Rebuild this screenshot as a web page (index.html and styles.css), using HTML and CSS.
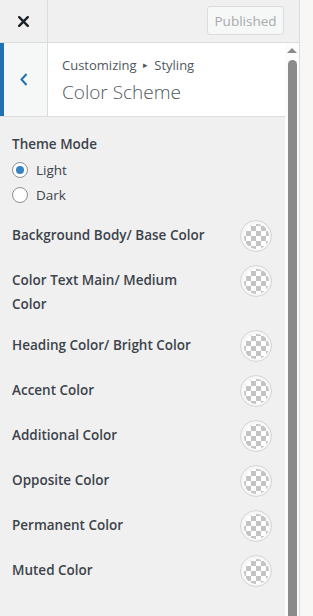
FILE: index.html
```html
<!DOCTYPE html>
<html lang="en">
<head>
    <meta charset="UTF-8">
    <meta name="viewport" content="width=device-width, initial-scale=1.0">
    <title>Customizer - Color Scheme</title>
    <link rel="stylesheet" href="styles.css">
</head>
<body>
    <div class="sidebar">
        <div class="topbar">
            <button class="close-btn" aria-label="Close">
                <svg width="11" height="11" viewBox="0 0 11 11"><path d="M1.2 1.2 L9.8 9.8 M9.8 1.2 L1.2 9.8" stroke="#1d2327" stroke-width="2.4" stroke-linecap="round"/></svg>
            </button>
            <div class="actions">
                <button class="publish-btn" disabled>Published</button>
            </div>
        </div>

        <div class="scroll">
            <div class="panel">
                <div class="section-head">
                    <button class="back-btn" aria-label="Back">
                        <svg width="8" height="13" viewBox="0 0 8 13"><path d="M6.5 1 L1.5 6.5 L6.5 12" fill="none" stroke="#2271b1" stroke-width="2"/></svg>
                    </button>
                    <div class="section-title">
                        <div class="crumb">Customizing <span class="sep">&#9656;</span> Styling</div>
                        <h3>Color Scheme</h3>
                    </div>
                </div>

                <div class="section-body">
                    <div class="control-title">Theme Mode</div>
                    <label class="radio-row"><span class="radio checked"></span>Light</label>
                    <label class="radio-row"><span class="radio"></span>Dark</label>

                    <div class="colors">
                        <div class="color-row"><span class="color-label">Background Body/ Base Color</span><span class="swatch"></span></div>
                        <div class="color-row"><span class="color-label">Color Text Main/ Medium Color</span><span class="swatch"></span></div>
                        <div class="color-row"><span class="color-label">Heading Color/ Bright Color</span><span class="swatch"></span></div>
                        <div class="color-row"><span class="color-label">Accent Color</span><span class="swatch"></span></div>
                        <div class="color-row"><span class="color-label">Additional Color</span><span class="swatch"></span></div>
                        <div class="color-row"><span class="color-label">Opposite Color</span><span class="swatch"></span></div>
                        <div class="color-row"><span class="color-label">Permanent Color</span><span class="swatch"></span></div>
                        <div class="color-row"><span class="color-label">Muted Color</span><span class="swatch"></span></div>
                    </div>
                </div>
            </div>
            <div class="scrollbar">
                <span class="arrow"></span>
                <span class="thumb"></span>
            </div>
        </div>
    </div>
    <div class="preview"></div>
</body>
</html>
```

FILE: styles.css
```css
body {
    margin: 0;
    height: 616px;
    overflow: hidden;
    display: flex;
    font-family: "Open Sans", "Noto Sans", sans-serif;
    color: #3c434a;
    background: #f9f6f6;
}
.sidebar {
    width: 299px;
    border-right: 1px solid #dcdcde;
    display: flex;
    flex-direction: column;
    background: #f0f0f1;
}
.preview {
    flex: 1;
    background: #f9f6f6;
}
button {
    font-family: inherit;
    border: none;
    padding: 0;
    margin: 0;
    box-sizing: border-box;
}
.topbar {
    height: 42px;
    border-bottom: 1px solid #dcdcde;
    display: flex;
    background: #f0f0f1;
}
.close-btn {
    width: 48px;
    border-right: 1px solid #dcdcde;
    background: transparent;
    display: flex;
    align-items: center;
    justify-content: center;
}
.actions {
    flex: 1;
    display: flex;
    justify-content: flex-end;
    align-items: flex-start;
    padding: 6px 15px 0 0;
}
.publish-btn {
    width: 77px;
    height: 29px;
    border: 1px solid #dcdcde;
    border-radius: 3px;
    background: #f6f7f7;
    color: #a7aaad;
    font-size: 13.5px;
}
.scroll {
    flex: 1;
    display: flex;
    min-height: 0;
}
.panel {
    flex: 1;
    overflow: hidden;
}
.scrollbar {
    width: 14px;
    background: #fcfcfc;
    display: flex;
    flex-direction: column;
    align-items: center;
    padding-top: 5px;
}
.arrow {
    width: 0;
    height: 0;
    border-left: 5px solid transparent;
    border-right: 5px solid transparent;
    border-bottom: 5px solid #8b8b8b;
}
.thumb {
    margin-top: 7px;
    width: 9px;
    flex: 1;
    background: #8b8b8b;
    border-radius: 5px 5px 0 0;
}
.section-head {
    height: 73px;
    display: flex;
    border-bottom: 1px solid #dcdcde;
    background: #fff;
}
.back-btn {
    width: 48px;
    flex-shrink: 0;
    border-left: 4px solid #2271b1;
    border-right: 1px solid #dcdcde;
    background: #f6f7f7;
    display: flex;
    align-items: center;
    justify-content: center;
    padding: 0 4px 1px 0;
}
.section-title {
    padding: 12px 0 0 14px;
}
.crumb {
    font-size: 13px;
    line-height: 20px;
    color: #50575e;
}
.sep {
    font-size: 9px;
    vertical-align: 2px;
    margin: 0 3px;
}
.section-title h3 {
    margin: 3px 0 0;
    font-size: 19px;
    font-weight: 300;
    line-height: 28px;
    color: #50575e;
}
.section-body {
    padding: 15px 12px 0 12px;
}
.control-title {
    font-size: 13.5px;
    font-weight: 600;
    line-height: 24px;
}
.radio-row {
    display: flex;
    align-items: center;
    height: 25px;
    font-size: 13.5px;
    gap: 8px;
}
.radio-row:first-of-type {
    margin-top: 1px;
}
.radio {
    width: 14px;
    height: 14px;
    border: 1px solid #8c8f94;
    border-radius: 50%;
    background: #fff;
    display: flex;
    align-items: center;
    justify-content: center;
}
.radio.checked::after {
    content: "";
    width: 8px;
    height: 8px;
    border-radius: 50%;
    background: #3582c4;
}
.colors {
    margin-top: 13px;
}
.color-row {
    display: flex;
    justify-content: space-between;
    align-items: flex-start;
    margin-bottom: 13px;
}
.color-label {
    width: 200px;
    padding: 3px 0 1px;
    font-size: 13.5px;
    font-weight: 600;
    line-height: 24px;
}
.swatch {
    width: 30px;
    height: 30px;
    margin-right: 1px;
    border: 1px solid #d4d4d4;
    border-radius: 50%;
    background: #f7f7f7;
    display: flex;
    align-items: center;
    justify-content: center;
}
.swatch::after {
    content: "";
    width: 25px;
    height: 25px;
    border-radius: 50%;
    background-color: #fff;
    background-image: conic-gradient(#c4c4c4 25%, #fff 0 50%, #c4c4c4 0 75%, #fff 0);
    background-size: 10px 10px;
    background-position: 2px 2px;
}
```
